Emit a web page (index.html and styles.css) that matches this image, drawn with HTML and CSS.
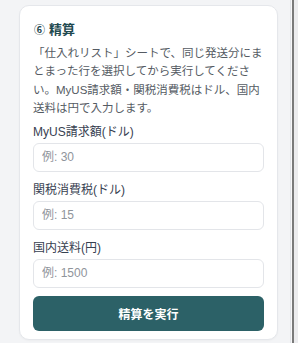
FILE: index.html
```html
<!DOCTYPE html>
<html lang="ja">
<head>
    <meta charset="UTF-8">
    <meta name="viewport" content="width=device-width, initial-scale=1.0">
    <title>精算</title>
    <link rel="stylesheet" href="styles.css">
</head>
<body>
    <div class="layout">
        <main class="panel">
            <section class="card">
                <h2 class="card-title"><span class="step">⑥</span>精算</h2>
                <p class="card-desc">「仕入れリスト」シートで、同じ発送分にまとまった行を選択してから実行してください。MyUS請求額・関税消費税はドル、国内送料は円で入力します。</p>

                <div class="field">
                    <label class="field-label" for="myus">MyUS請求額(ドル)</label>
                    <input class="field-input" id="myus" type="text" placeholder="例: 30">
                </div>
                <div class="field">
                    <label class="field-label" for="tax">関税消費税(ドル)</label>
                    <input class="field-input" id="tax" type="text" placeholder="例: 15">
                </div>
                <div class="field">
                    <label class="field-label" for="ship">国内送料(円)</label>
                    <input class="field-input" id="ship" type="text" placeholder="例: 1500">
                </div>

                <button class="run-btn">精算を実行</button>
            </section>
        </main>
        <div class="edge"></div>
    </div>
</body>
</html>
```

FILE: styles.css
```css
* {
    box-sizing: border-box;
}

html, body {
    margin: 0;
    height: 100%;
}

body {
    background: #f3f4f6;
    font-family: "Liberation Sans", "Noto Sans CJK JP", sans-serif;
    color: #374151;
}

.layout {
    display: flex;
    height: 100%;
}

.panel {
    width: 290px;
    padding: 5px 12px 0 19px;
}

.edge {
    flex: 1;
    border-left: 1px solid #e2e4e8;
    background: linear-gradient(to right, #f7f7f8 0, #f7f7f8 1px, #7a7a7a 1px, #7a7a7a 3px, #ececee 3px);
}

.card {
    background: #fff;
    border: 1px solid #e5e7eb;
    border-radius: 10px;
    padding: 14px 13px 8px;
    box-shadow: 0 1px 2px rgba(0, 0, 0, 0.03);
}

.card-title {
    margin: 0 0 4px 1px;
    font-size: 13px;
    line-height: 20px;
    font-weight: 700;
    color: #1f4a50;
    display: flex;
    align-items: center;
}

.step {
    font-size: 11px;
    margin-right: 4px;
}

.card-desc {
    margin: 0 0 5px;
    font-size: 11.5px;
    line-height: 18.4px;
    color: #555b63;
}

.field {
    margin-bottom: 9px;
}

.field-label {
    display: block;
    font-size: 12px;
    line-height: 18px;
    color: #374151;
    margin-bottom: 2px;
}

.field-input {
    display: block;
    width: 100%;
    height: 29px;
    padding: 0 8px;
    border: 1px solid #e3e5e9;
    border-radius: 6px;
    font-family: inherit;
    font-size: 12px;
    color: #374151;
    background: #fff;
}

.field-input::placeholder {
    color: #8f949b;
}

.run-btn {
    display: block;
    width: 100%;
    height: 35px;
    margin-top: -1px;
    border: none;
    border-radius: 6px;
    background: #2c6167;
    color: #fff;
    font-family: inherit;
    font-size: 12px;
    font-weight: 700;
    cursor: pointer;
}
```
